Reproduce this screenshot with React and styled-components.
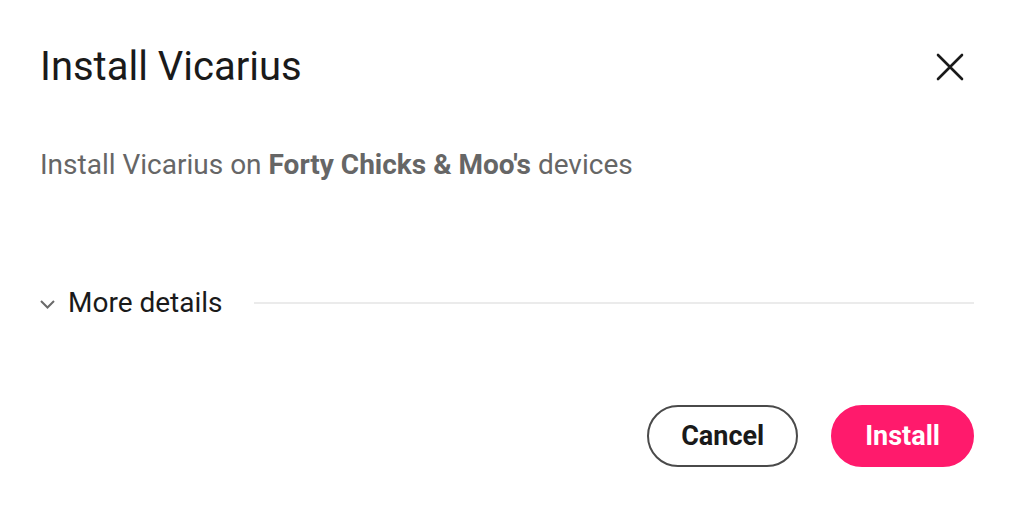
import styled, { createGlobalStyle } from 'styled-components'

const GlobalStyle = createGlobalStyle`
    * { box-sizing: border-box; }
    body {
        margin: 0;
        background: #ffffff;
        font-family: Roboto, "Noto Sans", Arial, sans-serif;
    }
`

export default function App() {
    return (
        <>
            <GlobalStyle />
            <DialogStyled>
                <header className="dialog-header">
                    <h1>Install Vicarius</h1>
                    <CloseButton aria-label="Close">
                        <svg width="28" height="28" viewBox="0 0 28 28" fill="none">
                            <path d="M2 2L26 26M26 2L2 26" stroke="#1a1a1a" strokeWidth="2.6" strokeLinecap="round" />
                        </svg>
                    </CloseButton>
                </header>
                <p className="description">
                    Install Vicarius on <strong>Forty Chicks &amp; Moo's</strong> devices
                </p>
                <DetailsToggle>
                    <svg width="15" height="9" viewBox="0 0 15 9" fill="none">
                        <path d="M1 1L7.5 7.5L14 1" stroke="#6a6a6a" strokeWidth="2" />
                    </svg>
                    <span>More details</span>
                    <div className="divider"></div>
                </DetailsToggle>
                <footer className="actions">
                    <ActionButton>Cancel</ActionButton>
                    <ActionButton $primary>Install</ActionButton>
                </footer>
            </DialogStyled>
        </>
    )
}

const DialogStyled = styled.div`
    display: flex;
    flex-direction: column;
    width: 1014px;
    height: 508px;
    padding: 41px 40px 41px 40px;
    background: #ffffff;
    .dialog-header {
        display: flex;
        align-items: center;
        justify-content: space-between;
        h1 {
            margin: 0;
            font-size: 40px;
            line-height: 52px;
            font-weight: 400;
            color: #1a1a1a;
        }
    }
    .description {
        margin: 54px 0 0 0;
        font-size: 28px;
        line-height: 36px;
        color: #666666;
        strong {
            font-weight: 700;
        }
    }
    .actions {
        display: flex;
        justify-content: flex-end;
        gap: 33px;
        margin-top: auto;
    }
`

const CloseButton = styled.button`
    display: flex;
    align-items: center;
    justify-content: center;
    width: 40px;
    height: 40px;
    margin-right: 4px;
    padding: 0;
    border: none;
    background: transparent;
    cursor: pointer;
`

const DetailsToggle = styled.div`
    display: flex;
    align-items: center;
    gap: 13px;
    margin-top: 102px;
    font-size: 28px;
    line-height: 36px;
    color: #1a1a1a;
    cursor: pointer;
    svg {
        margin-top: 2px;
    }
    .divider {
        flex: 1;
        height: 2px;
        margin-left: 18px;
        background: #ebebeb;
    }
`

const ActionButton = styled.button`
    height: 62px;
    padding: 0 32px;
    border-radius: 31px;
    border: 2px solid ${({ $primary }) => ($primary ? '#ff1a6c' : '#4a4a4a')};
    background: ${({ $primary }) => ($primary ? '#ff1a6c' : '#ffffff')};
    color: ${({ $primary }) => ($primary ? '#ffffff' : '#1a1a1a')};
    font-family: Roboto, "Noto Sans", Arial, sans-serif;
    font-size: 27px;
    font-weight: 700;
    cursor: pointer;
`
